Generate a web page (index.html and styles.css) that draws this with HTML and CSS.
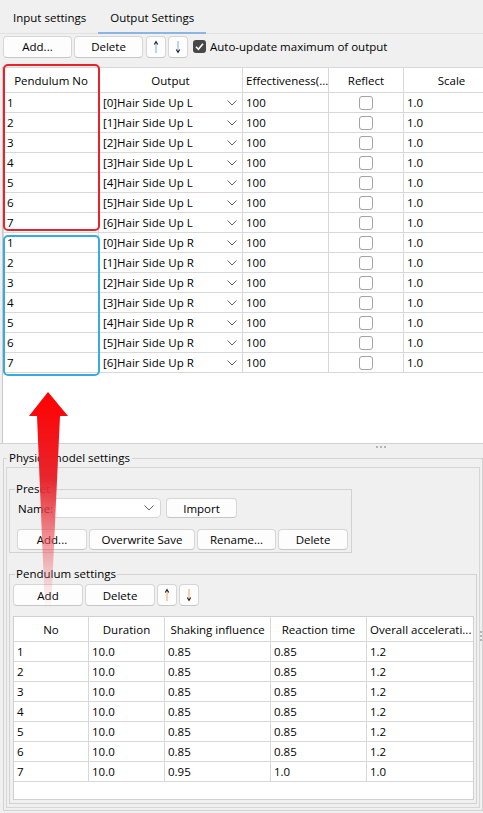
FILE: index.html
```html
<!DOCTYPE html>
<html>
<head>
<meta charset="utf-8">
<link rel="stylesheet" href="styles.css">
</head>
<body>
<div class="app">
  <div class="tabs">
    <div class="tab">Input settings</div>
    <div class="tab active">Output Settings</div>
  </div>

  <div class="toolbar">
    <button class="btn w69">Add...</button>
    <button class="btn w69">Delete</button>
    <button class="btn sq gapl"><svg class="arr" viewBox="0 0 8 14"><line x1="4" y1="3" x2="4" y2="13" class="shaft blue"/><path d="M2.3 4.6 L4 1.6 L5.7 4.6" class="head"/></svg></button>
    <button class="btn sq"><svg class="arr" viewBox="0 0 8 14"><line x1="4" y1="1" x2="4" y2="11" class="shaft blue"/><path d="M2.3 9.4 L4 12.4 L5.7 9.4" class="head"/></svg></button>
    <label class="check">
      <span class="cb"><svg viewBox="0 0 13 13"><path d="M3 6.8 L5.4 9.2 L10 3.8"/></svg></span>
      <span class="cbtext">Auto-update maximum of output</span>
    </label>
  </div>

  <div class="outpanel">
    <table class="otable">
      <colgroup>
        <col class="oc1"><col class="oc2"><col class="oc3"><col class="oc4"><col class="oc5">
      </colgroup>
      <thead>
        <tr><th>Pendulum No</th><th>Output</th><th class="left">Effectiveness(...</th><th>Reflect</th><th>Scale</th></tr>
      </thead>
      <tbody>
        <tr><td>1</td><td><div class="ocell"><span>[0]Hair Side Up L</span><svg class="chev" viewBox="0 0 10 6"><path d="M0.5 0.5 L5 5 L9.5 0.5"/></svg></div></td><td>100</td><td class="center"><span class="rbox"></span></td><td>1.0</td></tr>
        <tr><td>2</td><td><div class="ocell"><span>[1]Hair Side Up L</span><svg class="chev" viewBox="0 0 10 6"><path d="M0.5 0.5 L5 5 L9.5 0.5"/></svg></div></td><td>100</td><td class="center"><span class="rbox"></span></td><td>1.0</td></tr>
        <tr><td>3</td><td><div class="ocell"><span>[2]Hair Side Up L</span><svg class="chev" viewBox="0 0 10 6"><path d="M0.5 0.5 L5 5 L9.5 0.5"/></svg></div></td><td>100</td><td class="center"><span class="rbox"></span></td><td>1.0</td></tr>
        <tr><td>4</td><td><div class="ocell"><span>[3]Hair Side Up L</span><svg class="chev" viewBox="0 0 10 6"><path d="M0.5 0.5 L5 5 L9.5 0.5"/></svg></div></td><td>100</td><td class="center"><span class="rbox"></span></td><td>1.0</td></tr>
        <tr><td>5</td><td><div class="ocell"><span>[4]Hair Side Up L</span><svg class="chev" viewBox="0 0 10 6"><path d="M0.5 0.5 L5 5 L9.5 0.5"/></svg></div></td><td>100</td><td class="center"><span class="rbox"></span></td><td>1.0</td></tr>
        <tr><td>6</td><td><div class="ocell"><span>[5]Hair Side Up L</span><svg class="chev" viewBox="0 0 10 6"><path d="M0.5 0.5 L5 5 L9.5 0.5"/></svg></div></td><td>100</td><td class="center"><span class="rbox"></span></td><td>1.0</td></tr>
        <tr><td>7</td><td><div class="ocell"><span>[6]Hair Side Up L</span><svg class="chev" viewBox="0 0 10 6"><path d="M0.5 0.5 L5 5 L9.5 0.5"/></svg></div></td><td>100</td><td class="center"><span class="rbox"></span></td><td>1.0</td></tr>
        <tr><td>1</td><td><div class="ocell"><span>[0]Hair Side Up R</span><svg class="chev" viewBox="0 0 10 6"><path d="M0.5 0.5 L5 5 L9.5 0.5"/></svg></div></td><td>100</td><td class="center"><span class="rbox"></span></td><td>1.0</td></tr>
        <tr><td>2</td><td><div class="ocell"><span>[1]Hair Side Up R</span><svg class="chev" viewBox="0 0 10 6"><path d="M0.5 0.5 L5 5 L9.5 0.5"/></svg></div></td><td>100</td><td class="center"><span class="rbox"></span></td><td>1.0</td></tr>
        <tr><td>3</td><td><div class="ocell"><span>[2]Hair Side Up R</span><svg class="chev" viewBox="0 0 10 6"><path d="M0.5 0.5 L5 5 L9.5 0.5"/></svg></div></td><td>100</td><td class="center"><span class="rbox"></span></td><td>1.0</td></tr>
        <tr><td>4</td><td><div class="ocell"><span>[3]Hair Side Up R</span><svg class="chev" viewBox="0 0 10 6"><path d="M0.5 0.5 L5 5 L9.5 0.5"/></svg></div></td><td>100</td><td class="center"><span class="rbox"></span></td><td>1.0</td></tr>
        <tr><td>5</td><td><div class="ocell"><span>[4]Hair Side Up R</span><svg class="chev" viewBox="0 0 10 6"><path d="M0.5 0.5 L5 5 L9.5 0.5"/></svg></div></td><td>100</td><td class="center"><span class="rbox"></span></td><td>1.0</td></tr>
        <tr><td>6</td><td><div class="ocell"><span>[5]Hair Side Up R</span><svg class="chev" viewBox="0 0 10 6"><path d="M0.5 0.5 L5 5 L9.5 0.5"/></svg></div></td><td>100</td><td class="center"><span class="rbox"></span></td><td>1.0</td></tr>
        <tr><td>7</td><td><div class="ocell"><span>[6]Hair Side Up R</span><svg class="chev" viewBox="0 0 10 6"><path d="M0.5 0.5 L5 5 L9.5 0.5"/></svg></div></td><td>100</td><td class="center"><span class="rbox"></span></td><td>1.0</td></tr>
      </tbody>
    </table>
  </div>

  <div class="splitter"><span class="grip"><i></i><i></i><i></i></span></div>

  <fieldset class="physics">
    <legend>Physics model settings</legend>
    <div class="frame">
      <fieldset class="preset">
        <legend>Preset</legend>
        <div class="namerow">
          <span class="namelbl">Name:</span>
          <div class="combo"><svg class="chev" viewBox="0 0 10 6"><path d="M0.5 0.5 L5 5 L9.5 0.5"/></svg></div>
          <button class="btn import">Import</button>
        </div>
        <div class="presetbtns">
          <button class="btn w70">Add...</button>
          <button class="btn w106">Overwrite Save</button>
          <button class="btn w79">Rename...</button>
          <button class="btn w70">Delete</button>
        </div>
      </fieldset>

      <fieldset class="pend">
        <legend>Pendulum settings</legend>
        <div class="pendbtns">
          <button class="btn w70">Add</button>
          <button class="btn w70">Delete</button>
          <button class="btn sq"><svg class="arr" viewBox="0 0 8 14"><line x1="4" y1="3" x2="4" y2="13" class="shaft orange"/><path d="M2.3 4.6 L4 1.6 L5.7 4.6" class="head"/></svg></button>
          <button class="btn sq"><svg class="arr" viewBox="0 0 8 14"><line x1="4" y1="1" x2="4" y2="11" class="shaft orange"/><path d="M2.3 9.4 L4 12.4 L5.7 9.4" class="head"/></svg></button>
        </div>
        <div class="pwrap">
          <table class="ptable">
            <colgroup>
              <col class="pc1"><col class="pc2"><col class="pc3"><col class="pc4"><col class="pc5">
            </colgroup>
            <thead>
              <tr><th>No</th><th>Duration</th><th>Shaking influence</th><th>Reaction time</th><th class="left">Overall accelerati...</th></tr>
            </thead>
            <tbody>
              <tr><td>1</td><td>10.0</td><td>0.85</td><td>0.85</td><td>1.2</td></tr>
              <tr><td>2</td><td>10.0</td><td>0.85</td><td>0.85</td><td>1.2</td></tr>
              <tr><td>3</td><td>10.0</td><td>0.85</td><td>0.85</td><td>1.2</td></tr>
              <tr><td>4</td><td>10.0</td><td>0.85</td><td>0.85</td><td>1.2</td></tr>
              <tr><td>5</td><td>10.0</td><td>0.85</td><td>0.85</td><td>1.2</td></tr>
              <tr><td>6</td><td>10.0</td><td>0.85</td><td>0.85</td><td>1.2</td></tr>
              <tr><td>7</td><td>10.0</td><td>0.95</td><td>1.0</td><td>1.0</td></tr>
            </tbody>
          </table>
        </div>
      </fieldset>
    </div>
  </fieldset>

  <span class="vgrip"><i></i><i></i><i></i></span>

  <div class="mark red"></div>
  <div class="mark blue"></div>
  <svg class="bigarrow" viewBox="0 0 100 230" width="100" height="230">
    <defs>
      <linearGradient id="ag" gradientUnits="userSpaceOnUse" x1="0" y1="7" x2="0" y2="225">
        <stop offset="0" stop-color="#ff0000"/>
        <stop offset="0.4" stop-color="#e8262e"/>
        <stop offset="0.7" stop-color="#ea4a52" stop-opacity="0.55"/>
        <stop offset="1" stop-color="#f28a8a" stop-opacity="0"/>
      </linearGradient>
    </defs>
    <polygon points="48,7 29,31 37,31 45,225 51,225 60,31 68,31" fill="url(#ag)"/>
  </svg>
</div>
</body>
</html>
```

FILE: styles.css
```css
* { box-sizing: border-box; }
html, body { margin: 0; padding: 0; }
body {
  font-family: "Open Sans", "Liberation Sans", sans-serif;
  font-size: 11.5px;
  color: #000;
  background: #f0f0f0;
}
.app {
  position: relative;
  width: 483px;
  height: 813px;
  overflow: hidden;
  background: #f0f0f0;
}

/* tabs */
.tabs {
  display: flex;
  height: 34px;
  padding-left: 1px;
  border-bottom: 1px solid #e2e2e2;
}
.tab {
  display: flex;
  align-items: center;
  padding: 2px 12px 0;
}
.tab.active {
  border-bottom: 2px solid #8db5e3;
  margin-bottom: -1px;
}

/* buttons */
.btn {
  font: inherit;
  color: #000;
  height: 22px;
  padding: 0;
  margin: 0;
  background: #fdfdfd;
  border: 1px solid #d6d6d6;
  border-bottom-color: #c6c6c6;
  border-radius: 4px;
  display: flex;
  align-items: center;
  justify-content: center;
}
.w69 { width: 69px; }
.w70 { width: 70px; }
.w79 { width: 79px; }
.w106 { width: 106px; }
.sq { width: 20px; }
.arr { width: 8px; height: 14px; }
.arr .shaft { stroke-width: 1.2; }
.arr .shaft.blue { stroke: #8fbbe6; }
.arr .shaft.orange { stroke: #f2b27a; }
.arr .head { fill: none; stroke: #1a1a1a; stroke-width: 1.1; }

/* toolbar */
.toolbar {
  display: flex;
  align-items: center;
  gap: 2px;
  height: 24px;
  padding: 1px 0 0 3px;
}
.gapl { margin-left: 1px; }
.check {
  display: flex;
  align-items: center;
  margin-left: 3px;
}
.cb {
  width: 13px;
  height: 13px;
  border-radius: 3px;
  background: #474747;
  display: flex;
}
.cb svg { width: 13px; height: 13px; }
.cb path { fill: none; stroke: #fff; stroke-width: 1.6; }
.cbtext { margin-left: 4px; }

/* output table */
.outpanel {
  margin: 9px 0 0 2px;
  height: 376px;
  background: #fff;
  border-left: 1px solid #c9c9c9;
  overflow: hidden;
}
.otable, .ptable {
  border-collapse: separate;
  border-spacing: 0;
  table-layout: fixed;
}
.otable { width: 497px; }
.oc1 { width: 96px; }
.oc2 { width: 144px; }
.oc3 { width: 86px; }
.oc4 { width: 75px; }
.oc5 { width: 96px; }
.otable th, .otable td,
.ptable th, .ptable td {
  border-right: 1px solid #d8d8d8;
  border-bottom: 1px solid #d8d8d8;
  padding: 0 3px;
  white-space: nowrap;
  overflow: hidden;
  font-weight: normal;
  text-align: left;
}
.otable th { height: 26px; border-top: 1px solid #d8d8d8; text-align: center; }
.otable td { height: 20px; }
.otable th:first-child, .otable td:first-child { border-left: 1px solid #d8d8d8; }
.otable th.left, .ptable th.left { text-align: left; }
.center { text-align: center !important; }
.ocell {
  display: flex;
  align-items: center;
  justify-content: space-between;
  padding-left: 1px;
}
.chev { width: 10px; height: 6px; }
.chev path { fill: none; stroke: #606060; stroke-width: 1; }
.ocell .chev { margin-right: 2px; }
.rbox {
  display: inline-block;
  width: 14px;
  height: 14px;
  border: 1px solid #a3a3a3;
  border-radius: 3px;
  background: #fff;
  vertical-align: middle;
  margin-top: -2px;
}

/* splitter */
.splitter {
  height: 7px;
  border-top: 1px solid #d2d2d2;
  display: flex;
  padding: 2px 0 0 376px;
}
.grip { display: flex; gap: 2px; }
.grip i { width: 2px; height: 2px; background: #b5b5b5; display: block; }
.vgrip {
  position: absolute;
  left: 480px;
  top: 631px;
  display: flex;
  flex-direction: column;
  gap: 2px;
}
.vgrip i { width: 2px; height: 2px; background: #b5b5b5; display: block; }

/* group boxes */
fieldset {
  margin: 0;
  min-width: 0;
  border: 1px solid #d2d2d2;
}
legend {
  line-height: 16px;
  padding: 0 1px;
}
.physics {
  margin-left: 3px;
  width: 480px;
  padding: 1px 2px 2px 2px;
}
.physics > legend { margin-left: 1px; padding: 0 2px; }
.frame {
  border: 1px solid #d6d6d6;
  padding: 0 2px 3px 2px;
}
.preset {
  width: 343px;
  margin-top: 13px;
  padding: 1px 3px 2px 7px;
}
.preset > legend { margin-left: -2px; }
.namerow {
  display: flex;
  align-items: center;
  height: 20px;
}
.namelbl { width: 35px; padding-left: 1px; }
.combo {
  width: 109px;
  height: 20px;
  background: #fff;
  border: 1px solid #d6d6d6;
  border-radius: 4px;
  display: flex;
  align-items: center;
  justify-content: flex-end;
  padding-right: 6px;
}
.import { width: 71px; height: 20px; margin-left: 5px; }
.presetbtns {
  display: flex;
  gap: 2px;
  margin-top: 11px;
}
.presetbtns .btn { height: 21px; }

.pend {
  margin-top: 13px;
  padding: 2px 2px 3px 3px;
}
.pend > legend { margin-left: 2px; }
.pendbtns {
  display: flex;
  gap: 2px;
}
.pwrap {
  margin-top: 10px;
  height: 184px;
  background: #fff;
  border: 1px solid #d0d0d0;
  overflow: hidden;
}
.ptable { width: 459px; }
.pc1 { width: 75px; }
.pc2 { width: 76px; }
.pc3 { width: 106px; }
.pc4 { width: 96px; }
.pc5 { width: 106px; }
.ptable th { height: 25px; text-align: center; }
.ptable td { height: 20px; }
.ptable th:last-child, .ptable td:last-child { border-right: none; }

/* annotations */
.mark {
  position: absolute;
  left: 3px;
  width: 97px;
  border-radius: 5px;
  border: 2px solid;
}
.mark.red { top: 64px; height: 167px; border-color: #e8212a; }
.mark.blue { top: 235px; height: 141px; border-color: #35abe2; }
.bigarrow {
  position: absolute;
  left: 0;
  top: 385px;
}
```
